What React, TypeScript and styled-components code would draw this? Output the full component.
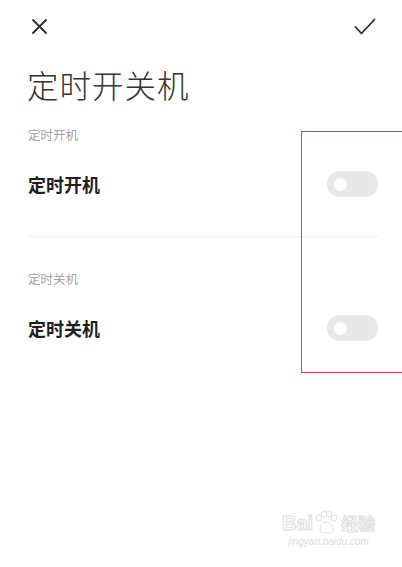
import React from "react";
import styled, { createGlobalStyle } from "styled-components";

const GlobalStyle = createGlobalStyle`
  html, body {
    margin: 0;
    padding: 0;
    background: #ffffff;
  }
  body {
    font-family: "Noto Sans CJK SC", "Noto Sans", sans-serif;
  }
`;

const Page = styled.div`
  position: relative;
  width: 402px;
  height: 567px;
  overflow: hidden;
  background: #ffffff;
`;

const TopBar = styled.div`
  height: 52px;
  display: flex;
  align-items: center;
  justify-content: space-between;
  padding: 0 26px 0 31px;
`;

const IconButton = styled.div`
  display: flex;
  align-items: center;
  justify-content: center;
  color: #2b2b2b;
`;

const Title = styled.h1`
  margin: 12px 0 0 27px;
  font-size: 31.5px;
  line-height: 40px;
  font-weight: 300;
  color: #333333;
  letter-spacing: 1px;
`;

const Section = styled.div<{ $top: number }>`
  padding: ${(p) => p.$top}px 24px 0 28px;
  display: flex;
  flex-direction: column;
  gap: 14px;
`;

const Label = styled.div`
  font-size: 12.5px;
  line-height: 20px;
  color: #a3a3a3;
`;

const Row = styled.div`
  height: 50px;
  display: flex;
  align-items: center;
  justify-content: space-between;
`;

const Name = styled.div`
  font-size: 18px;
  font-weight: 700;
  color: #1f1f1f;
`;

const Track = styled.div`
  width: 51px;
  height: 26px;
  border-radius: 13px;
  background: #e8e8e8;
  display: flex;
  align-items: center;
  padding-left: 7px;
  box-sizing: border-box;
`;

const Knob = styled.div`
  width: 13px;
  height: 13px;
  border-radius: 50%;
  background: #ffffff;
`;

const Divider = styled.div`
  height: 1px;
  background: #f0f0f0;
  margin: 27px 24px 0 28px;
`;

const Highlight = styled.div`
  position: absolute;
  left: 301px;
  top: 131px;
  width: 120px;
  height: 242px;
  border: 1px solid #c8474b;
  box-sizing: border-box;
`;

const Watermark = styled.div`
  position: absolute;
  left: 282px;
  top: 510px;
  display: flex;
  flex-direction: column;
  align-items: center;
  color: #ffffff;
  font-family: "Liberation Sans", Arial, sans-serif;
`;

const MarkLine = styled.div`
  display: flex;
  align-items: flex-end;
  font-size: 20px;
  font-weight: 700;
  line-height: 22px;
  -webkit-text-stroke: 1px #dedede;
`;

const MarkCn = styled.span`
  font-family: "Noto Sans CJK SC", sans-serif;
  font-size: 17px;
  margin-left: 2px;
`;

const MarkUrl = styled.div`
  font-size: 10px;
  font-style: italic;
  color: #dcdcdc;
  margin-top: 2px;
`;

const Paw = () => (
  <svg width="26" height="24" viewBox="0 0 26 24" fill="#fff" stroke="#dedede" strokeWidth="1">
    <ellipse cx="6" cy="8" rx="2.6" ry="3.2" />
    <ellipse cx="11" cy="4" rx="2.6" ry="3.2" />
    <ellipse cx="16" cy="4" rx="2.6" ry="3.2" />
    <ellipse cx="21" cy="8" rx="2.6" ry="3.2" />
    <path d="M7 20c0-4 3-8 6.5-8s6.5 4 6.5 8c0 2-2 3-6.5 3S7 22 7 20z" />
  </svg>
);

const Toggle = () => (
  <Track>
    <Knob />
  </Track>
);

const items = [
  { label: "定时开机", top: 21 },
  { label: "定时关机", top: 32 },
];

export default function App() {
  return (
    <Page>
      <GlobalStyle />
      <TopBar>
        <IconButton>
          <svg width="17" height="17" viewBox="0 0 17 17" fill="none" stroke="currentColor" strokeWidth="1.8" strokeLinecap="round">
            <path d="M2 2l13 13M15 2L2 15" />
          </svg>
        </IconButton>
        <IconButton>
          <svg width="22" height="17" viewBox="0 0 22 17" fill="none" stroke="currentColor" strokeWidth="1.8" strokeLinecap="round" strokeLinejoin="round">
            <path d="M1.5 9l6 6.5L20.5 1.5" />
          </svg>
        </IconButton>
      </TopBar>
      <Title>定时开关机</Title>
      {items.map((it, i) => (
        <React.Fragment key={it.label}>
          {i > 0 && <Divider />}
          <Section $top={it.top}>
            <Label>{it.label}</Label>
            <Row>
              <Name>{it.label}</Name>
              <Toggle />
            </Row>
          </Section>
        </React.Fragment>
      ))}
      <Highlight />
      <Watermark>
        <MarkLine>
          Bai
          <Paw />
          <MarkCn>经验</MarkCn>
        </MarkLine>
        <MarkUrl>jingyan.baidu.com</MarkUrl>
      </Watermark>
    </Page>
  );
}
